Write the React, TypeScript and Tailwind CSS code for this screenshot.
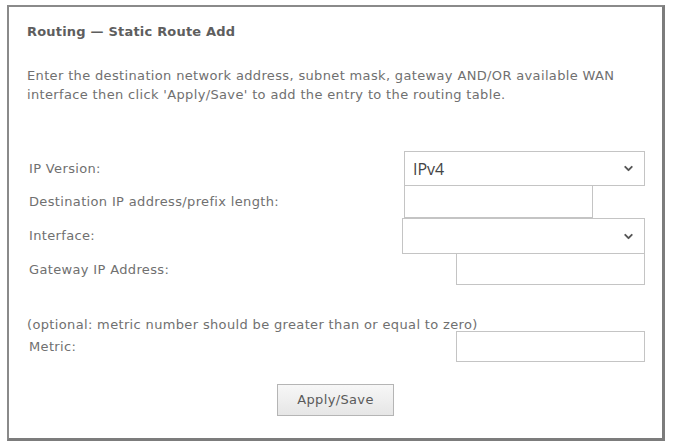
import { ChevronDown } from 'lucide-react'
import React from 'react'

const labelCls = 'w-[375px] shrink-0 pl-[2px]'

export default function App() {
  return (
    <div className="w-[673px] h-[443px] bg-white pt-[5px] pl-[7px] font-['DejaVu_Sans',Verdana,sans-serif] text-[13px] tracking-[0.35px] text-[#707070]">
      <div className="w-[658px] h-[436px] border-2 border-[#8a8a8a] border-r-[3px] border-b-[3px] border-r-[#7c7c7c] border-b-[#7c7c7c] pl-[18px] pr-[10px]">
        <h1 className="mt-[15px] font-bold text-[#5e5e5e] leading-[20px] tracking-[0.2px]">Routing &mdash; Static Route Add</h1>

        <p className="mt-[24px] leading-[19px] whitespace-nowrap">
          Enter the destination network address, subnet mask, gateway AND/OR available WAN
          <br />
          interface then click 'Apply/Save' to add the entry to the routing table.
        </p>

        <div className="mt-[47px] flex flex-col">
          <div className="flex items-center h-[35px]">
            <span className={labelCls}>IP Version:</span>
            <div className="ml-[2px] w-[241px] h-[35px] border border-[#c4c4c4] flex items-center justify-between pl-[8px] pr-[9px]">
              <span className="font-['Open_Sans',sans-serif] text-[16px] tracking-normal text-[#444]">IPv4</span>
              <ChevronDown size={13} strokeWidth={3.5} className="text-[#555]" />
            </div>
          </div>

          <div className="flex items-center h-[32px]">
            <span className={labelCls}>Destination IP address/prefix length:</span>
            <div className="ml-[2px] w-[189px] h-[32px] border border-[#c4c4c4] border-t-0" />
          </div>

          <div className="flex items-center h-[36px]">
            <span className={labelCls}>Interface:</span>
            <div className="w-[243px] h-[36px] border border-[#c4c4c4] flex items-center justify-end pr-[9px]">
              <ChevronDown size={13} strokeWidth={3.5} className="text-[#555]" />
            </div>
          </div>

          <div className="flex items-center h-[31px]">
            <span className={labelCls}>Gateway IP Address:</span>
            <div className="ml-[54px] w-[189px] h-[31px] border border-[#c4c4c4] border-t-0" />
          </div>
        </div>

        <p className="mt-[31px] leading-[17px]">(optional: metric number should be greater than or equal to zero)</p>

        <div className="flex items-center h-[31px] -mt-[2px]">
          <span className={labelCls}>Metric:</span>
          <div className="ml-[54px] w-[189px] h-[31px] border border-[#c4c4c4]" />
        </div>

        <div className="mt-[22px] flex justify-center pr-[8px]">
          <button className="w-[117px] h-[32px] border border-[#b5b5b5] bg-gradient-to-b from-[#f7f7f7] to-[#e6e6e6] text-[13px] text-[#5a5a5a]">
            Apply/Save
          </button>
        </div>
      </div>
    </div>
  )
}
